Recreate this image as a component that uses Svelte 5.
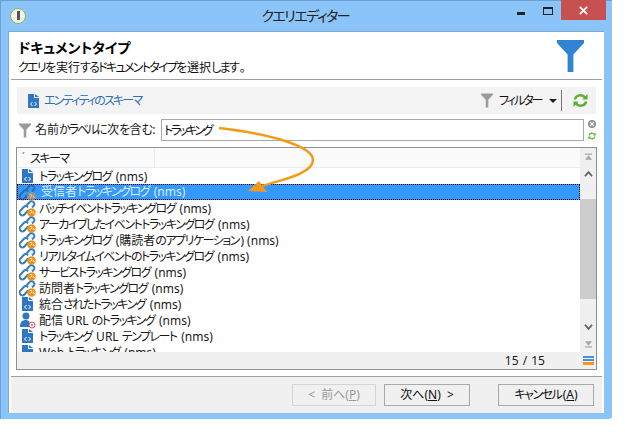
<script lang="ts">
  const rows = [
    { icon: "doc", label: "トラッキングログ (nms)" },
    { icon: "link", label: "受信者トラッキングログ (nms)", selected: true },
    { icon: "link", label: "バッチイベントトラッキングログ (nms)" },
    { icon: "link", label: "アーカイブしたイベントトラッキングログ (nms)" },
    { icon: "link", label: "トラッキングログ (購読者のアプリケーション) (nms)" },
    { icon: "link", label: "リアルタイムイベントのトラッキングログ (nms)" },
    { icon: "link", label: "サービストラッキングログ (nms)" },
    { icon: "link", label: "訪問者トラッキングログ (nms)" },
    { icon: "doc", label: "統合されたトラッキング (nms)" },
    { icon: "user", label: "配信 URL のトラッキング (nms)" },
    { icon: "doc", label: "トラッキング URL テンプレート (nms)" },
    { icon: "doc", label: "Web トラッキング (nms)" },
  ];

  // the original UI font has much narrower kana than kanji
  const runs = (text) => text.split(/([\u3040-\u30ff]+)/);
</script>

{#snippet jp(text)}
  {#each runs(text) as run, i}{#if i % 2}<span class="kana">{run}</span>{:else}{run}{/if}{/each}
{/snippet}

{#snippet funnel(cls)}
  <svg class={cls} viewBox="0 0 28 33"><path d="M0 0H28V3L17 15V33H11V15L0 3Z" /></svg>
{/snippet}

{#snippet refresh(cls)}
  <svg class={cls} viewBox="0 0 16 16" fill="none" stroke="#5bb030" stroke-width="2.6">
    <path d="M2 7A6 5.5 0 0 1 13 5" />
    <path d="M14 9A6 5.5 0 0 1 3 11" />
    <path d="M15.5 1V7H10Z M.5 15V9H6Z" fill="#5bb030" stroke="none" />
  </svg>
{/snippet}

{#snippet docIcon()}
  <svg class="rowicon" viewBox="0 0 16 16">
    <path d="M3 1H9V5H14V15H3Z" fill="#2f77c4" />
    <path d="M10 1L14 4H10Z" fill="#2f77c4" />
    <path d="M7.500 9L5.500 11L7.500 13M9.500 9L11.500 11L9.500 13" fill="none" stroke="#fff" stroke-width="1" />
  </svg>
{/snippet}

{#snippet linkIcon(selected)}
  <svg class="rowicon wide" viewBox="0 0 17 17" opacity={selected ? 0.6 : 1}>
    <g fill="none" stroke={selected ? "#264d7a" : "#3a7cc4"} stroke-width="2">
      <path d="M7 6L10 2.800A2.400 2.400 0 0 1 15 5.500L13 7.500" />
      <path d="M9 10.500L5.500 14.500A2.700 2.700 0 0 1 1.500 10.500L5 6.800A2.500 2.500 0 0 1 9 7.500" />
    </g>
    <circle cx="12.500" cy="12.500" r="4.300" fill="#ee9320" />
    <path d="M11 10L13 11.500L11.500 13.500M14 12L15.500 14" stroke="#fff" fill="none" stroke-width="1" />
  </svg>
{/snippet}

{#snippet userIcon()}
  <svg class="rowicon wide" viewBox="0 0 17 17">
    <circle cx="7" cy="4" r="3.500" fill="#2f77c4" />
    <path d="M1 15C1 9 4 8 7 8C9 8 10 9 10.500 10V15Z" fill="#2f77c4" />
    <circle cx="13" cy="13" r="3" fill="#fff" stroke="#e04a4a" stroke-width="1" />
    <circle cx="13" cy="13" r="1" fill="#e04a4a" />
  </svg>
{/snippet}

<div class="page">
  <div class="window">
    <header class="titlebar">
      <span class="appicon"><span></span></span>
      <h1>{@render jp("クエリエディター")}</h1>
      <div class="controls">
        <span class="min"></span>
        <span class="max"></span>
        <span class="close">
          <svg viewBox="0 0 10 10"><path d="M1 1L9 9M9 1L1 9" stroke="#fff" stroke-width="2" /></svg>
        </span>
      </div>
    </header>

    <div class="client">
      <section class="head">
        <div>
          <h2>ドキュメントタイプ</h2>
          <p>{@render jp("クエリを実行するドキュメントタイプを選択します。")}</p>
        </div>
        {@render funnel("bigfunnel")}
      </section>

      <section class="main">
        <div class="toolbar">
          {@render docIcon()}
          <span class="schema">{@render jp("エンティティのスキーマ")}</span>
          <span class="spacer"></span>
          {@render funnel("smallfunnel")}
          <span class="filter">{@render jp("フィルター")}</span>
          <span class="caret"></span>
          <span class="divider"></span>
          {@render refresh("refresh")}
        </div>

        <div class="search">
          {@render funnel("smallfunnel")}
          <label for="q">{@render jp("名前かラベルに次を含む:")}</label>
          <input id="q" value="トラッキング" />
          <div class="mini">
            <span class="clear">
              <svg viewBox="0 0 8 8"><path d="M2 2L6 6M6 2L2 6" stroke="#fff" stroke-width="1.300" /></svg>
            </span>
            {@render refresh("minirefresh")}
          </div>
        </div>

        <div class="grid">
          <div class="content">
            <div class="gridhead">
              <span class="sort">ˊ</span>
              <span class="col">{@render jp("スキーマ")}</span>
            </div>
            <div class="rows">
              {#each rows as row}
                <div class="row" class:selected={row.selected}>
                  {#if row.icon === "doc"}
                    {@render docIcon()}
                  {:else if row.icon === "user"}
                    {@render userIcon()}
                  {:else}
                    {@render linkIcon(row.selected)}
                  {/if}
                  <span class="label">{@render jp(row.label)}</span>
                </div>
              {/each}
            </div>
            <div class="status"><span class="count">15 / 15</span></div>
          </div>
          <div class="scrollbar">
            <span class="btn top">
              <svg viewBox="0 0 10 8"><path d="M1 0H9V1.500H1ZM5 2L9 7H1Z" fill="#a8a8a8" /></svg>
            </span>
            <span class="btn">
              <svg viewBox="0 0 10 8"><path d="M1 6.500L5 2L9 6.500" fill="none" stroke="#606060" stroke-width="2" /></svg>
            </span>
            <div class="track"><div class="before"></div><div class="thumb"></div></div>
            <span class="btn">
              <svg viewBox="0 0 10 8"><path d="M1 1.500L5 6L9 1.500" fill="none" stroke="#606060" stroke-width="2" /></svg>
            </span>
            <span class="btn">
              <svg viewBox="0 0 10 8"><path d="M1 1L9 1L5 6ZM1 6.500H9V8H1Z" fill="#a8a8a8" /></svg>
            </span>
            <span class="lines"><i></i><i></i><i class="orange"></i></span>
          </div>
        </div>
      </section>

      <footer class="foot">
        <button disabled>&lt; 前へ(<u>P</u>)</button>
        <button class="next">次へ(<u>N</u>) &gt;</button>
        <button class="cancel">{@render jp("キャンセル")}(<u>A</u>)</button>
      </footer>
    </div>

    <svg class="arrow" viewBox="0 0 625 436">
      <path d="M219 128C270 134 313 146 313 160C313 174 280 180 262 186" fill="none" stroke="#f59a17" stroke-width="2.500" />
      <path d="M248 191L259 181L267 192Z" fill="#f59a17" />
    </svg>
  </div>
</div>

<style>
  :global(body) {
    margin: 0;
    background: #fff;
  }

  .page {
    width: 625px;
    height: 436px;
    overflow: hidden;
    font: 12px/16px "Noto Sans", "Noto Sans CJK JP", sans-serif;
    font-feature-settings: "palt";
    color: #1a1a1a;
  }

  .kana {
    letter-spacing: -1.5px;
    padding-right: 1.500px;
  }

  .window {
    position: relative;
    width: 612px;
    height: 419px;
    box-sizing: border-box;
    padding: 1px 8px 6px 8px;
    background: #8ac4f8;
    border-radius: 0 0 3px 0;
    box-shadow: inset 0 1px #6f9fd0, inset 1px 0 #6f9fd0;
  }

  .titlebar {
    height: 30px;
    display: flex;
    align-items: center;
    position: relative;
  }

  .appicon {
    width: 14px;
    height: 14px;
    margin: -1px 0 0 2px;
    border-radius: 50%;
    background: #f4f4ee;
    border: 1px solid #8db35c;
    display: flex;
    align-items: center;
    justify-content: center;
  }

  .appicon span {
    width: 3px;
    height: 9px;
    background: #555;
  }

  h1 {
    flex: 1;
    margin: 0;
    padding-right: 18px;
    text-align: center;
    font-size: 14px;
    font-weight: 400;
    color: #222;
  }

  .controls {
    position: absolute;
    top: -1px;
    right: -2px;
    display: flex;
    align-items: flex-start;
  }

  .min {
    width: 8px;
    height: 3px;
    background: #222;
    margin: 12px 18px 0 0;
  }

  .max {
    width: 8px;
    height: 5px;
    border: 1px solid #222;
    border-top-width: 2px;
    margin: 7px 8px 0 0;
  }

  .close {
    width: 45px;
    height: 20px;
    background: #c75050;
    display: flex;
    align-items: center;
    justify-content: center;
  }

  .close svg {
    width: 9px;
    height: 9px;
  }

  .client {
    height: 382px;
    background: #fff;
    display: flex;
    flex-direction: column;
    border: 1px solid #7fa9d3;
    border-width: 1px 0 0 1px;
    box-sizing: border-box;
  }

  .head {
    height: 48px;
    margin: 0 2px;
    padding: 6px 18px 0 7px;
    box-sizing: border-box;
    flex: none;
    display: flex;
    justify-content: space-between;
    border-bottom: 1px solid #a0a0a0;
  }

  h2 {
    margin: 0;
    font-size: 14px;
    line-height: 19px;
    color: #000;
  }

  p {
    margin: 3px 0 0;
    font-size: 12px;
    line-height: 15px;
    color: #111;
  }

  p :global(.kana) {
    letter-spacing: -1.700px;
  }

  .bigfunnel {
    width: 27px;
    height: 32px;
    margin-top: 2px;
    fill: #2f83d3;
  }

  .main {
    flex: 1;
    padding: 7px 7px 0 8px;
  }

  .toolbar {
    height: 27px;
    width: 579px;
    background: #f3f3f3;
    display: flex;
    align-items: center;
    padding-left: 8px;
    box-sizing: border-box;
  }

  .schema {
    margin-left: 3px;
    color: #2f6fb8;
  }

  .schema :global(.kana) {
    letter-spacing: -1.800px;
  }

  .spacer {
    flex: 1;
  }

  .smallfunnel {
    width: 12px;
    height: 15px;
    fill: #9b9b9b;
    flex: none;
  }

  .filter {
    margin-left: 6px;
    color: #111;
  }

  .filter :global(.kana) {
    letter-spacing: -2px;
  }

  .caret {
    margin-left: 6px;
    border: 4px solid transparent;
    border-top: 4px solid #222;
    border-bottom: 0;
  }

  .divider {
    width: 1px;
    height: 21px;
    background: #777;
    margin-left: 4px;
  }

  .refresh {
    width: 15px;
    height: 15px;
    margin: 0 8px 0 11px;
  }

  .minirefresh {
    width: 8px;
    height: 8px;
  }

  .rowicon {
    width: 16px;
    height: 16px;
    flex: none;
  }

  .rowicon.wide {
    width: 17px;
    height: 17px;
    margin-right: -1px;
  }

  .search {
    height: 22px;
    margin-top: 5px;
    display: flex;
    align-items: center;
    padding-left: 2px;
  }

  label {
    margin-left: 4px;
    width: 126px;
    white-space: nowrap;
  }

  label :global(.kana) {
    letter-spacing: -2.100px;
  }

  input {
    width: 423px;
    height: 22px;
    box-sizing: border-box;
    margin: 0;
    border: 1px solid #a8a8a8;
    padding: 0 2px;
    font: inherit;
    font-feature-settings: "palt";
    letter-spacing: -2.400px;
    color: #111;
    outline: none;
  }

  .mini {
    margin-left: 4px;
    display: flex;
    flex-direction: column;
    gap: 4px;
    align-items: center;
  }

  .clear {
    width: 8px;
    height: 8px;
    border-radius: 50%;
    background: #8c8c8c;
    display: block;
  }

  .clear svg {
    display: block;
  }

  .grid {
    width: 581px;
    height: 223px;
    margin: 6px 0 0 -1px;
    box-sizing: border-box;
    border: 1px solid #8f8f8f;
    display: flex;
  }

  .content {
    flex: 1;
    min-width: 0;
    display: flex;
    flex-direction: column;
  }

  .gridhead {
    height: 20px;
    flex: none;
    background: #fbfbfb;
    border-bottom: 1px solid #e6edf8;
    display: flex;
    align-items: center;
    box-sizing: border-box;
    line-height: 21px;
  }

  .sort {
    width: 13px;
    text-align: center;
    color: #666;
    font-size: 10px;
  }

  .col {
    width: 124px;
    height: 100%;
    border-right: 1px solid #e6edf8;
  }

  .rows {
    flex: 1;
    min-height: 0;
    overflow: hidden;
    background: #fff;
  }

  .row {
    height: 16px;
    display: flex;
    align-items: center;
    gap: 4px;
    padding-left: 2px;
    white-space: nowrap;
  }

  .label {
    padding-top: 1px;
  }

  .row.selected {
    background: #3399ff;
    color: #ddeeff;
    outline: 1px dotted #000;
    outline-offset: -1px;
  }

  .row.selected .label {
    margin-left: 2px;
    padding-top: 0;
  }

  .status {
    height: 17px;
    flex: none;
    background: #f0f0f0;
    display: flex;
    justify-content: flex-end;
    align-items: center;
    padding: 1px 35px 0 0;
    box-sizing: border-box;
  }

  .count {
    word-spacing: 1px;
  }

  .scrollbar {
    width: 16px;
    flex: none;
    background: #f0f0f0;
    display: flex;
    flex-direction: column;
  }

  .btn {
    height: 17px;
    flex: none;
    display: flex;
    align-items: center;
    justify-content: center;
  }

  .btn svg {
    width: 9px;
    height: 8px;
  }

  .track {
    flex: 1;
    display: flex;
    flex-direction: column;
  }

  .before {
    height: 17px;
  }

  .thumb {
    height: 100px;
    background: #cdcdcd;
  }

  .lines {
    height: 17px;
    flex: none;
    display: flex;
    flex-direction: column;
    justify-content: center;
    gap: 1px;
    padding: 0 2px 0 3px;
  }

  .lines i {
    height: 2px;
    background: #4a90d9;
  }

  .lines i.orange {
    height: 3px;
    background: #f59a17;
  }

  .foot {
    flex: 1;
    margin: 6px 2px 0;
    background: #f0f0f0;
    border-top: 1px solid #a0a0a0;
    display: flex;
    align-items: center;
    padding: 0 8px 0 0;
    justify-content: flex-end;
    gap: 8px;
  }

  button {
    width: 84px;
    height: 22px;
    box-sizing: border-box;
    padding: 0;
    background: #f0f0f0;
    border: 1px solid #a9a9a9;
    font: inherit;
    font-feature-settings: "palt";
    word-spacing: 3px;
    color: #111;
  }

  button:disabled {
    color: #9a9a9a;
    border-color: #d4d4d4;
  }

  .next {
    width: 86px;
  }

  .cancel {
    width: 96px;
    margin-left: 20px;
  }

  .arrow {
    position: absolute;
    left: 0;
    top: 0;
    width: 625px;
    height: 436px;
    pointer-events: none;
  }
</style>
